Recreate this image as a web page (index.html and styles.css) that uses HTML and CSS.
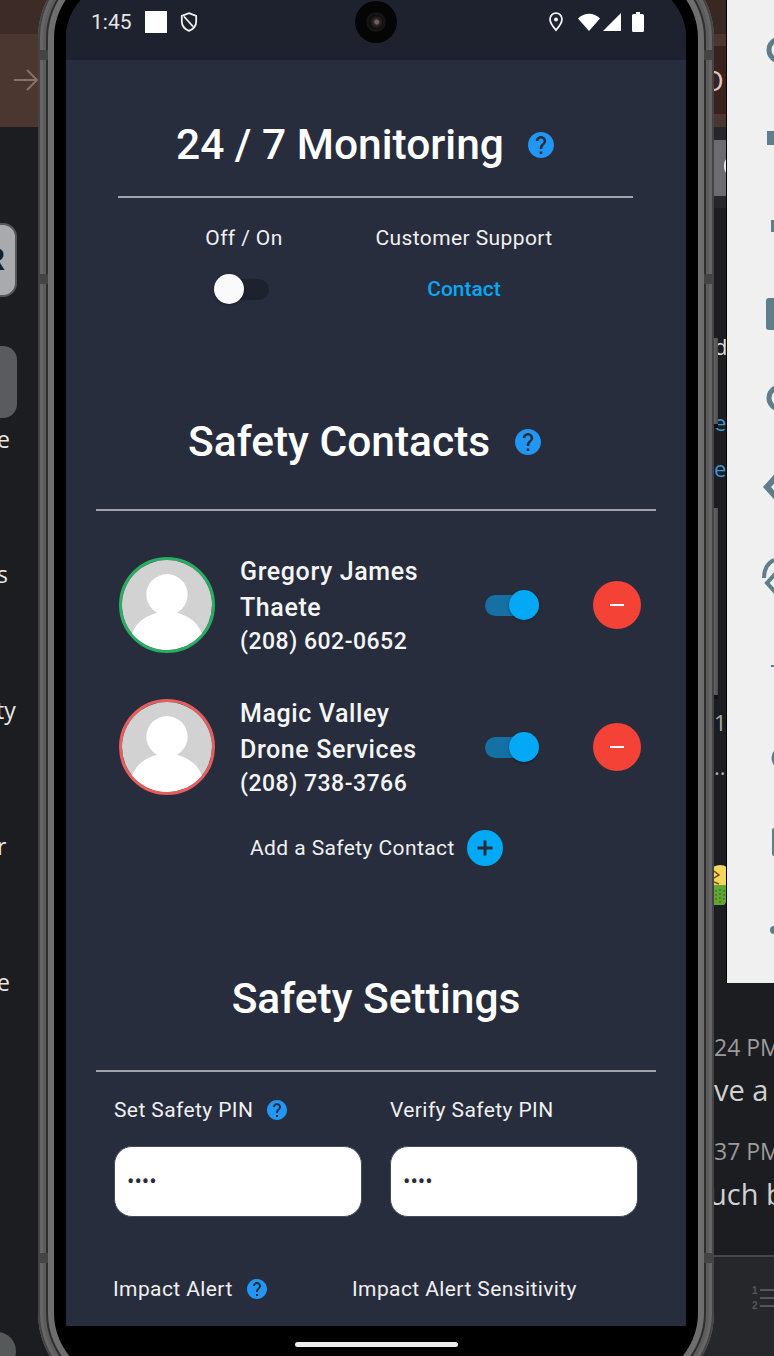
FILE: index.html
```html
<!DOCTYPE html>
<html lang="en">
<head>
<meta charset="utf-8">
<title>24 / 7 Monitoring</title>
<link rel="stylesheet" href="styles.css">
</head>
<body>
<div class="desktop">
  <div class="bg-left">
    <div class="band-top"></div>
    <div class="band-brown">
      <svg class="arrow" viewBox="0 0 26 26"><path d="M1 13h23M14 3l10 10-10 10" fill="none" stroke="#8a7069" stroke-width="2"/></svg>
    </div>
    <div class="chip chip-light"><span class="chip-letter">R</span></div>
    <div class="chip chip-dark"></div>
    <span class="frag fl fl-a">e</span>
    <span class="frag fl fl-b">s</span>
    <span class="frag fl fl-c">ty</span>
    <span class="frag fl fl-d">r</span>
    <span class="frag fl fl-e">e</span>
    <div class="blob"></div>
  </div>

  <div class="bg-right">
    <div class="stripe s1"></div>
    <div class="stripe s2"></div>
    <div class="stripe s3"></div>
    <div class="stripe s4"></div>
    <div class="stripe s5"></div>
    <div class="stripe s6"><span class="glint"></span></div>
    <span class="frag ring">O</span>
    <span class="frag fr fr-d">d</span>
    <span class="frag fr blue fr-e1">e</span>
    <span class="frag fr blue fr-e2">e</span>
    <span class="frag fr grey fr-one">1</span>
    <span class="frag fr grey fr-dots">...</span>
    <svg class="emoji" viewBox="0 0 13 40">
      <circle cx="6" cy="12" r="12" fill="#f2d95c"/>
      <path d="M0 6l5 4-5 3M0 17l5 2" fill="none" stroke="#7a4a1c" stroke-width="1.5"/>
      <path d="M0 20h13v16l-3 4H0z" fill="#63a532"/>
      <path d="M2 25v12M6 24v14M10 25v10" stroke="#3f7d22" stroke-width="1.500" stroke-dasharray="2 2"/>
    </svg>
    <span class="frag msg-time mt-a">24 PM</span>
    <span class="frag msg msg-a">ve a</span>
    <span class="frag msg-time mt-b">37 PM</span>
    <span class="frag msg msg-b">uch b</span>
    <div class="composer">
      <svg class="list-icon" viewBox="0 0 22 26"><path d="M8 5h14M8 13h14M8 21h14" stroke="#55565a" stroke-width="2" fill="none"/><text x="0" y="9" class="list-num">1</text><text x="0" y="24" class="list-num">2</text></svg>
    </div>
  </div>

  <div class="window">
    <svg class="window-icons" viewBox="0 0 47 983">
      <circle cx="53" cy="50" r="11" fill="none" stroke="#607d8b" stroke-width="5"/>
      <rect x="40" y="131" width="7" height="14" fill="#607d8b"/>
      <rect x="44" y="220" width="3" height="12" fill="#607d8b"/>
      <rect x="39" y="298" width="10" height="32" rx="3" fill="#607d8b"/>
      <circle cx="53" cy="398" r="11" fill="none" stroke="#607d8b" stroke-width="5"/>
      <path d="M50 476l-10 11 10 11" fill="none" stroke="#607d8b" stroke-width="6"/>
      <path d="M50 572l-10 11 10 11M37 578a14 18 0 0 1 10-18" fill="none" stroke="#607d8b" stroke-width="4"/>
      <rect x="44" y="665" width="3" height="2" fill="#607d8b"/>
      <circle cx="56" cy="758" r="9" fill="none" stroke="#607d8b" stroke-width="5"/>
      <rect x="45" y="828" width="4" height="28" rx="2" fill="#607d8b"/>
      <circle cx="47" cy="930" r="4" fill="#607d8b"/>
    </svg>
  </div>

  <div class="side-btn btn-a"></div>
  <div class="side-btn btn-b"></div>

  <div class="phone">
    <div class="bezel-mid">
      <div class="bezel-inner">
        <div class="glass">
          <main class="screen">
            <header class="status">
              <span class="clock">1:45</span>
              <span class="square"></span>
              <svg class="ic-shield" viewBox="0 0 18 20"><path d="M9 1.2l7.2 2.6v5.400c0 4.400-3 7.900-7.200 9.600-4.200-1.700-7.200-5.200-7.200-9.600V3.800zM4 4.500l9 10" fill="none" stroke="#f2f2f2" stroke-width="1.8"/></svg>
              <span class="status-gap"></span>
              <svg class="ic-pin" viewBox="0 0 16 20"><path d="M8 1.2c3.400 0 6 2.600 6 6 0 4-6 11-6 11s-6-7-6-11c0-3.400 2.600-6 6-6z" fill="none" stroke="#f2f2f2" stroke-width="1.8"/><circle cx="8" cy="7.400" r="2" fill="#f2f2f2"/></svg>
              <svg class="ic-wifi" viewBox="0 0 22 18"><path d="M0 5.500C6 -1 16 -1 22 5.500L11 18z" fill="#fff"/></svg>
              <svg class="ic-signal" viewBox="0 0 18 18"><path d="M18 0v18H0z" fill="#fff"/></svg>
              <svg class="ic-battery" viewBox="0 0 12 20"><path d="M4 0h4v2h2.500a1.500 1.500 0 0 1 1.500 1.500V18.500a1.500 1.500 0 0 1-1.500 1.500H1.500A1.500 1.500 0 0 1 0 18.500V3.500A1.500 1.500 0 0 1 1.500 2H4z" fill="#fff"/></svg>
            </header>

            <section class="section-monitor">
              <div class="title-row title-monitor">
                <h1 class="title">24 / 7 Monitoring</h1>
                <svg class="help help-lg" viewBox="2 2 20 20"><use href="#help"/></svg>
              </div>
              <hr class="rule rule-short">
              <div class="monitor-grid">
                <div class="cell cell-off">
                  <span class="label">Off / On</span>
                  <div class="toggle toggle-off"><span class="thumb"></span></div>
                </div>
                <div class="cell cell-support">
                  <span class="label">Customer Support</span>
                  <a class="contact-link">Contact</a>
                </div>
              </div>
            </section>

            <section class="section-contacts">
              <div class="title-row title-contacts">
                <h2 class="title">Safety Contacts</h2>
                <svg class="help help-lg" viewBox="2 2 20 20"><use href="#help"/></svg>
              </div>
              <hr class="rule">
              <div class="contact">
                <div class="avatar avatar-green">
                  <svg viewBox="0 0 96 96"><use href="#person"/></svg>
                </div>
                <div class="contact-text">
                  <div class="name">Gregory James</div>
                  <div class="name">Thaete</div>
                  <div class="phone-no">(208) 602-0652</div>
                </div>
                <div class="toggle toggle-on"><span class="thumb"></span></div>
                <button class="remove"><span class="minus"></span></button>
              </div>
              <div class="contact">
                <div class="avatar avatar-red">
                  <svg viewBox="0 0 96 96"><use href="#person"/></svg>
                </div>
                <div class="contact-text">
                  <div class="name">Magic Valley</div>
                  <div class="name">Drone Services</div>
                  <div class="phone-no">(208) 738-3766</div>
                </div>
                <div class="toggle toggle-on"><span class="thumb"></span></div>
                <button class="remove"><span class="minus"></span></button>
              </div>
              <div class="add-row">
                <span class="label">Add a Safety Contact</span>
                <span class="add-btn"><svg viewBox="0 0 36 36"><path d="M18 10.500v15M10.500 18h15" stroke="#272d3d" stroke-width="3" fill="none"/></svg></span>
              </div>
            </section>

            <section class="section-settings">
              <h2 class="title title-center">Safety Settings</h2>
              <hr class="rule">
              <div class="pin-grid">
                <div class="pin-field">
                  <div class="label-row"><span class="label">Set Safety PIN</span><svg class="help help-sm" viewBox="2 2 20 20"><use href="#help"/></svg></div>
                  <div class="pin-input">••••</div>
                </div>
                <div class="pin-field">
                  <div class="label-row"><span class="label">Verify Safety PIN</span></div>
                  <div class="pin-input">••••</div>
                </div>
              </div>
              <div class="impact-row">
                <div class="label-row"><span class="label">Impact Alert</span><svg class="help help-sm" viewBox="2 2 20 20"><use href="#help"/></svg></div>
                <span class="label">Impact Alert Sensitivity</span>
              </div>
            </section>
          </main>
          <div class="home-bar"></div>
        </div>
      </div>
    </div>
    <div class="camera"><div class="lens"></div></div>
    <span class="ant ant-lt"></span>
    <span class="ant ant-lm"></span>
    <span class="ant ant-lb"></span>
    <span class="ant ant-rt"></span>
    <span class="ant ant-rm"></span>
    <span class="ant ant-rb"></span>
  </div>
</div>

<svg class="defs" aria-hidden="true">
  <defs>
    <path id="help" fill="#2196f3" fill-rule="evenodd" d="M12 2C6.480 2 2 6.480 2 12s4.480 10 10 10 10-4.480 10-10S17.520 2 12 2zm1 17h-2v-2h2v2zm2.070-7.750l-.9.920C13.450 12.900 13 13.500 13 15h-2v-.5c0-1.100.45-2.100 1.170-2.830l1.240-1.260c.37-.36.59-.86.59-1.410 0-1.100-.9-2-2-2s-2 .9-2 2H8c0-2.210 1.790-4 4-4s4 1.790 4 4c0 .88-.36 1.680-.93 2.250z"/>
    <g id="person">
      <rect width="96" height="96" fill="#d2d2d2"/>
      <circle cx="48" cy="37" r="22" fill="#fff"/>
      <ellipse cx="48" cy="88" rx="39" ry="33" fill="#fff"/>
      <rect x="38" y="52" width="20" height="10" fill="#fff"/>
    </g>
  </defs>
</svg>
</body>
</html>
```
FILE: styles.css
```css
* { box-sizing: border-box; }
html, body { margin: 0; padding: 0; }
body { width: 774px; height: 1356px; overflow: hidden; background: #1c1d21; font-family: Roboto, "Liberation Sans", sans-serif; }
.defs { position: absolute; width: 0; height: 0; }

.desktop { position: relative; width: 774px; height: 1356px; overflow: hidden; background: #1c1d21; }

/* Windows behind the phone */
.bg-left { position: absolute; left: 0; top: 0; width: 60px; height: 1356px; }
.band-top { height: 34px; background: #3d2b27; }
.band-brown { height: 93px; background: #4c3630; position: relative; }
.arrow { position: absolute; left: 13px; top: 33px; width: 26px; height: 26px; }
.chip { position: absolute; left: -40px; width: 57px; border-radius: 14px; }
.chip-light { top: 223px; height: 74px; background: #a9aaad; border: 2px solid #55565a; overflow: hidden; }
.chip-dark { top: 346px; height: 72px; background: #5a5b5e; }
.chip-letter { position: absolute; right: 10px; top: 18px; font: 700 32px/32px "Liberation Sans", sans-serif; color: #1c1d21; }
.frag { position: absolute; white-space: nowrap; font-family: "Open Sans", sans-serif; }
.fl { left: -3px; font-size: 23px; line-height: 26px; color: #e8e8e8; }
.fl-a { top: 426px; }
.fl-b { top: 561px; }
.fl-c { top: 697px; left: -4px; }
.fl-d { top: 833px; }
.fl-e { top: 969px; }
.blob { position: absolute; left: -22px; top: 1332px; width: 38px; height: 38px; border-radius: 50%; background: #55595a; }

.bg-right { position: absolute; left: 700px; top: 0; width: 74px; height: 1356px; background: #1c1d21; overflow: hidden; }
.stripe { position: absolute; left: 0; right: 0; }
.s1 { top: 0; height: 34px; background: #3a2723; }
.s2 { top: 34px; height: 12px; background: #4c3630; }
.s3 { top: 46px; height: 68px; background: #3a221e; }
.s4 { top: 114px; height: 13px; background: #4c3630; }
.s5 { top: 127px; height: 81px; background: #26272b; }
.s6 { top: 140px; height: 56px; background: #6b6c70; }
.glint { position: absolute; left: 24px; top: 19px; width: 6px; height: 14px; border-radius: 50%; background: #ededed; }
.ring { left: 2px; top: 63px; font-size: 28px; line-height: 34px; color: #d8c8c2; }
.fr { left: 14px; font-size: 22px; line-height: 28px; color: #ddd; }
.fr.blue { color: #3d95d6; }
.fr.grey { color: #a8a8a8; }
.fr-d { top: 332px; }
.fr-e1 { top: 408px; }
.fr-e2 { top: 454px; }
.fr-one { top: 708px; }
.fr-dots { top: 752px; }
.emoji { position: absolute; left: 14px; top: 865px; width: 13px; height: 40px; }
.msg-time { left: 14px; font-size: 23px; line-height: 26px; color: #9b9b9b; }
.mt-a { top: 1034px; }
.mt-b { top: 1138px; }
.msg { left: 14px; font-size: 29px; line-height: 36px; color: #d0d0d0; }
.msg-a { top: 1072px; }
.msg-b { top: 1176px; left: 9px; }
.composer { position: absolute; left: 0; right: 0; top: 1255px; height: 101px; background: #26272b; border-top: 2px solid #47484b; }
.list-icon { position: absolute; left: 52px; top: 28px; width: 22px; height: 26px; }
.list-num { font: 700 10px "Liberation Sans", sans-serif; fill: #55565a; }

.window { position: absolute; left: 727px; top: 0; width: 47px; height: 983px; background: #f0f0f0; box-shadow: -1px 0 0 #000; }
.window-icons { display: block; width: 47px; height: 983px; }

.side-btn { position: absolute; left: 713px; width: 5px; background: linear-gradient(90deg, #6a6a6a, #4c4c4c); border-bottom: 4px solid #111; }
.btn-a { top: 338px; height: 90px; }
.btn-b { top: 508px; height: 191px; }

/* Phone */
.phone { position: absolute; left: 38px; top: -46px; width: 676px; height: 1443px; border-radius: 84px; background: #5c5c5c; padding: 8px; box-shadow: inset 0 0 0 2px #444, inset 0 0 0 5px #666; }
.bezel-mid { height: 100%; border-radius: 76px; background: #2f2f2f; padding: 2px; }
.bezel-inner { height: 100%; border-radius: 74px; background: #6e6e6e; padding: 6px; }
.glass { height: 100%; border-radius: 68px; background: #000; padding: 12px; position: relative; overflow: hidden; }
.screen { height: 1344px; background: #272d3d; border-radius: 56px 56px 0 0; overflow: hidden; color: #fff; display: flow-root; }
.home-bar { width: 163px; height: 5px; border-radius: 3px; background: #eee; margin: 16px auto 0; }

.ant { position: absolute; width: 10px; height: 10px; background: #444; }
.ant-lt, .ant-lm, .ant-lb { left: 0; }
.ant-rt, .ant-rm, .ant-rb { right: 0; }
.ant-lt, .ant-rt { top: 96px; }
.ant-lm, .ant-rm { top: 320px; }
.ant-lb, .ant-rb { top: 1299px; }

.camera { position: absolute; left: 317px; top: 47px; width: 42px; height: 42px; border-radius: 50%; background: #050505; display: flex; align-items: center; justify-content: center; }
.lens { width: 14px; height: 14px; border-radius: 50%; background: radial-gradient(circle at 55% 50%, #7a5a6a 0 2px, #2c2a22 3px, #0e0e0e 7px); box-shadow: 0 0 0 3px #141414; }

/* Status bar */
.status { height: 78px; background: #1d222e; display: flex; align-items: center; padding: 2px 42px 0 25px; }
.clock { font-size: 21px; line-height: 24px; color: #e6e6e6; width: 54px; }
.square { width: 22px; height: 22px; background: #fff; margin-right: 13px; }
.ic-shield { width: 18px; height: 20px; }
.status-gap { flex: 1; }
.ic-pin { width: 16px; height: 20px; margin-right: 14px; }
.ic-wifi { width: 22px; height: 18px; margin-right: 3px; }
.ic-signal { width: 18px; height: 18px; margin-right: 11px; }
.ic-battery { width: 12px; height: 20px; }

/* Titles and rules */
.title { margin: 0; font-size: 42.500px; line-height: 48px; font-weight: 500; color: #fff; }
.title-center { text-align: center; }
.title-row { display: flex; align-items: center; }
.help { flex: none; display: block; }
.help-lg { width: 26px; height: 26px; }
.help-sm { width: 20px; height: 20px; margin-left: 14px; }
.rule { border: 0; height: 2px; background: #a0a2a8; margin: 0 30px; }
.rule-short { margin: 27px 53px 0 52px; }

.label { font-size: 21px; line-height: 24px; letter-spacing: .4px; color: #f0f0f0; white-space: nowrap; }

/* Monitoring */
.section-monitor { padding-top: 61px; }
.title-monitor { padding-left: 110px; gap: 24px; }
.monitor-grid { display: flex; padding-left: 132px; margin-top: 28px; }
.cell { display: flex; flex-direction: column; align-items: center; gap: 27px; }
.cell-off { width: 92px; margin-right: 86px; }
.cell-support { width: 176px; }
.contact-link { font-size: 21px; line-height: 24px; font-weight: 500; color: #03a9f4; }

/* Toggle */
.toggle { position: relative; height: 30px; display: flex; align-items: center; }
.toggle::before { content: ""; position: absolute; height: 21px; border-radius: 11px; left: 0; right: 0; }
.thumb { position: absolute; width: 30px; height: 30px; border-radius: 50%; box-shadow: 0 1px 3px rgba(0,0,0,.35); }
.toggle-off { width: 55px; margin: -3px 5px 0 0; }
.toggle-off::before { background: #1d222e; }
.toggle-off .thumb { left: 0; background: #fafafa; }
.toggle-on { flex: none; width: 54px; }
.toggle-on::before { background: #1570a3; }
.toggle-on .thumb { right: 0; background: #03a9f4; }

/* Contacts */
.section-contacts { padding-top: 114px; }
.title-contacts { padding-left: 122px; gap: 25px; }
.section-contacts .rule { margin-top: 43px; }
.contact { display: flex; align-items: center; padding-left: 53px; height: 142px; }
.rule + .contact { margin-top: 23px; }
.avatar { flex: none; width: 96px; height: 96px; border-radius: 50%; border: 3px solid; overflow: hidden; margin-right: 25px; }
.avatar svg { display: block; width: 90px; height: 90px; }
.avatar-green { border-color: #27ae60; }
.avatar-red { border-color: #e85c5c; }
.contact-text { width: 245px; padding-top: 1px; letter-spacing: .5px; font-weight: 500; color: #f5f5f5; }
.name { font-size: 25px; letter-spacing: .6px; line-height: 36px; }
.phone-no { font-size: 23px; line-height: 32px; }
.remove { flex: none; width: 48px; height: 48px; margin: 0 0 0 54px; padding: 0; border: 0; border-radius: 50%; background: #f44336; display: flex; align-items: center; justify-content: center; }
.minus { width: 14px; height: 2px; background: #fff; }
.add-row { display: flex; align-items: center; padding-left: 184px; gap: 12px; height: 36px; margin-top: 12px; }
.add-btn { flex: none; width: 36px; height: 36px; border-radius: 50%; background: #03a9f4; }
.add-btn svg { display: block; width: 36px; height: 36px; }

/* Settings */
.section-settings { padding-top: 109px; }
.section-settings .rule { margin-top: 47px; }
.pin-grid { display: flex; padding-left: 48px; gap: 28px; margin-top: 26px; }
.pin-field { width: 248px; }
.label-row { display: flex; align-items: center; height: 24px; }
.pin-input { height: 71px; margin-top: 24px; background: #fff; border: 1px solid #454b5b; border-radius: 18px; color: #272d3d; display: flex; align-items: center; padding-left: 12px; font-size: 22px; line-height: 24px; }
.impact-row { display: flex; padding-left: 47px; margin-top: 60px; }
.impact-row .label-row { width: 239px; }
```
